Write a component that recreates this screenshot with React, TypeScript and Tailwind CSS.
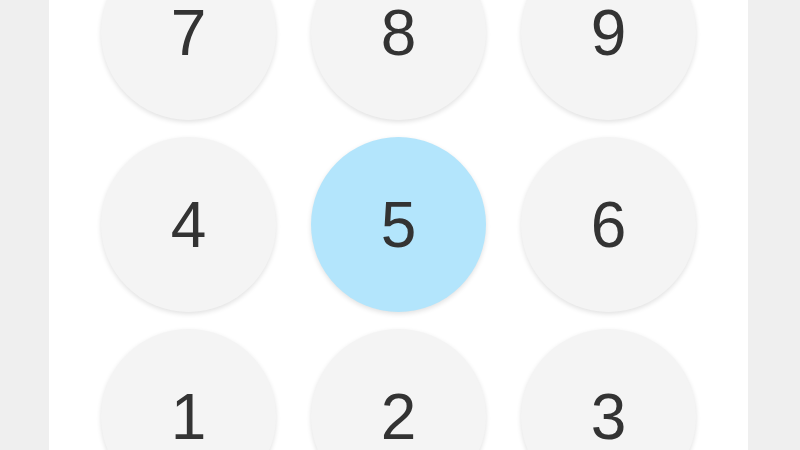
import React from 'react';

const KEYS = ['7', '8', '9', '4', '5', '6', '1', '2', '3'];

export default function App() {
  return (
    <div className="w-[800px] h-[450px] overflow-hidden bg-[#efefef] flex pl-[49px]">
      <div className="w-[699px] h-full bg-white flex pl-[52px]">
        <div className="grid grid-cols-[175px_175px_175px] gap-x-[35px] gap-y-[17px] mt-[-55px] content-start">
          {KEYS.map((k) => (
            <button
              key={k}
              className={
                k === '5'
                  ? 'w-[175px] h-[175px] rounded-full bg-[#b3e5fc] flex items-center justify-center text-[64px] text-[#333333] shadow-[0_2px_5px_rgba(0,0,0,0.12)]'
                  : 'w-[175px] h-[175px] rounded-full bg-[#f4f4f4] flex items-center justify-center text-[64px] text-[#333333] shadow-[0_2px_5px_rgba(0,0,0,0.12)]'
              }
              style={{ fontFamily: '"Liberation Sans", Arial, sans-serif' }}
            >
              {k}
            </button>
          ))}
        </div>
      </div>
    </div>
  );
}
